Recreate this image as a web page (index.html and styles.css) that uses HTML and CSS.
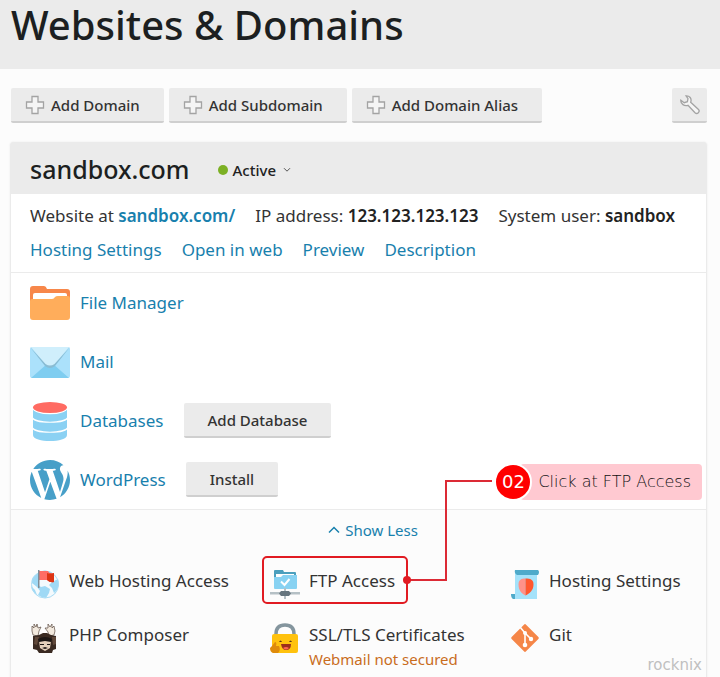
FILE: index.html
```html
<!DOCTYPE html>
<html lang="en">
<head>
<meta charset="utf-8">
<meta name="viewport" content="width=device-width, initial-scale=1">
<title>Websites &amp; Domains</title>
<link rel="stylesheet" href="styles.css">
</head>
<body>
<header class="page-header"><h1>Websites &amp; Domains</h1></header>
<main class="page">
  <div class="toolbar">
    <button class="btn btn-add" type="button"><svg class="plus" viewBox="0 0 20 20"><path d="M7 1.500h6v5.500h5.500v6H13v5.500H7V13H1.500V7H7z"/></svg>Add Domain</button>
    <button class="btn btn-add" type="button"><svg class="plus" viewBox="0 0 20 20"><path d="M7 1.500h6v5.500h5.500v6H13v5.500H7V13H1.500V7H7z"/></svg>Add Subdomain</button>
    <button class="btn btn-add" type="button"><svg class="plus" viewBox="0 0 20 20"><path d="M7 1.500h6v5.500h5.500v6H13v5.500H7V13H1.500V7H7z"/></svg>Add Domain Alias</button>
    <button class="btn btn-wrench" type="button" aria-label="Settings"><svg class="plus" viewBox="0 0 20 20"><path d="M6 .8C9.500.5 12 3.500 10.700 7.200l7.800 7.300c1.900 2.200-1.200 5.300-3.500 3.300L8 10.300C4.500 11.500.4 9 .8 5.200l3.400 2.500 3.200-1L8 3.600z"/></svg></button>
  </div>

  <section class="card">
    <header class="card-head">
      <h2>sandbox.com</h2>
      <button class="status" type="button"><span class="dot"></span>Active<svg class="chev" viewBox="0 0 8 6"><path d="M1 1.200l3 3 3-3"/></svg></button>
    </header>

    <div class="info">
      <div class="line">
        <span>Website at <a class="strong" href="#">sandbox.com/</a></span>
        <span>IP address: <b>123.123.123.123</b></span>
        <span>System user: <b>sandbox</b></span>
      </div>
      <nav class="line">
        <a href="#">Hosting Settings</a><a href="#">Open in web</a><a href="#">Preview</a><a href="#">Description</a>
      </nav>
    </div>

    <div class="tools">
      <div class="tool">
        <svg class="tool-icon" viewBox="0 0 40 40"><path fill="#f7874a" d="M0 6q0-3 3-3h11q2 0 3 3h20q3 0 3 3v14H0z"/><path fill="#fff" d="M3 12q0-2 2-2h30q2 0 2 2v8H3z"/><path fill="#ffad5b" d="M0 18q0-2 2-2h20q2 0 3-2 1-1 3-1h10q2 0 2 2v19q0 3-3 3H3q-3 0-3-3z"/></svg>
        <a href="#">File Manager</a>
      </div>
      <div class="tool">
        <svg class="tool-icon" viewBox="0 0 40 40"><rect y="5" width="40" height="31" rx="2" fill="#abe1fb"/><path fill="#7fcdf0" d="M1 36l16-14h6l16 14z"/><path fill="#d0effc" d="M1 5h38L24 23q-4 3-8 0z"/><path fill="#8abcd3" d="M0 5l15.500 17q4.500 3 9 0L40 5 25 24q-5 4-10 0z"/></svg>
        <a href="#">Mail</a>
      </div>
      <div class="tool">
        <svg class="tool-icon" viewBox="0 0 40 40"><path fill="#8bd1f3" d="M3 6v28c0 8 34 8 34 0V6z"/><path fill="none" stroke="#fff" stroke-width="1.200" d="M2 16c2 7 34 7 36 0M2 26c2 7 34 7 36 0"/><ellipse cx="20" cy="7" rx="17.500" ry="6.300" fill="#fff"/><ellipse cx="20" cy="6.500" rx="17" ry="5.500" fill="#ff6b62"/></svg>
        <a href="#">Databases</a>
        <button class="btn" type="button">Add Database</button>
      </div>
      <div class="tool">
        <svg class="tool-icon" viewBox="33 33 446 446"><path fill="#479fc8" d="M33 256c0-32.300 6.900-63 19.300-90.700l106.400 291.400C84.300 420.500 33 344.200 33 256zm223 223c-21.900 0-43-3.200-63-9.100l66.900-194.400 68.500 187.800c.5 1.100 1 2.100 1.600 3.100-23.100 8.100-48 12.600-74 12.600zm30.700-327.500c13.400-.7 25.500-2.100 25.500-2.100 12-1.400 10.600-19.100-1.400-18.400 0 0-36.100 2.800-59.400 2.800-21.900 0-58.700-2.800-58.700-2.800-12-.7-13.400 17.700-1.400 18.400 0 0 11.400 1.400 23.400 2.100l34.700 95.200L200.600 393l-81.200-241.500c13.400-.7 25.500-2.100 25.500-2.100 12-1.400 10.600-19.100-1.400-18.400 0 0-36.100 2.800-59.400 2.800-4.200 0-9.100-.1-14.400-.3C109.600 73 178.100 33 256 33c58 0 110.900 22.200 150.600 58.500-1-.1-1.900-.2-2.900-.2-21.900 0-37.400 19.100-37.400 39.600 0 18.400 10.600 33.900 21.900 52.300 8.500 14.800 18.400 33.900 18.400 61.500 0 19.100-7.300 41.200-17 72.100l-22.200 74.300-80.700-239.600zm81.400 297.200l68.100-196.900c12.700-31.800 17-57.200 17-79.900 0-8.200-.5-15.800-1.500-22.900 17.400 31.800 27.300 68.200 27.300 107 0 82.300-44.600 154.100-110.900 192.700z"/></svg>
        <a href="#">WordPress</a>
        <button class="btn" type="button">Install</button>
      </div>
    </div>

    <div class="more">
      <button class="toggle" type="button"><svg class="caret" viewBox="0 0 12 8"><path d="M1 6.500l5-5 5 5"/></svg>Show Less</button>
      <div class="grid">
        <a class="item" href="#">
          <svg class="item-icon" viewBox="0 0 30 30"><circle cx="15" cy="15.500" r="14" fill="#f4fafd"/><path fill="#9fd9f5" d="M4 7l4-3v12l3 2 4-1 5 3-1 4-3 5q-5-.5-8-3l2-4-3-4-5-4q-1-4 2-7zM12 2q8-1 12 4l-2 3-5 1-5-2zM22 13l6-3q2 6-1 11l-3 3-2-5-3-3zM1 17l4 4 2 5q-5-3-6-9z"/><circle cx="15" cy="15.500" r="13.500" fill="none" stroke="#aadcf4"/><path fill="#ff6d65" d="M9 2h9q1 3 6 2v9q-4 1-7-2H9z"/><path fill="#dc3514" d="M17 4q3 1 7 0v9q-4 1-7-2z"/><path fill="#7e8d97" d="M8 1h1.500v18H8z"/></svg>
          <span>Web Hosting Access</span>
        </a>
        <a class="item ftp" href="#">
          <svg class="item-icon" viewBox="0 0 30 30"><path fill="#4b9fbd" d="M4 2q0-1 1-1h8l1 2h11q1 0 1 1v5H4z"/><path fill="#fff" d="M6 5h18v3H6z"/><path fill="#88d2f2" d="M4 8h7l2-2h14v13q0 1-1 1H5q-1 0-1-1z"/><path fill="none" stroke="#fff" stroke-width="2" d="M11 12.500l3.500 3.500 5-6"/><path fill="#b5c0c5" d="M0 23h30v2.500H0zM14 19h2v11h-2z"/><path fill="#66757e" d="M11 22h8l2 2.500-2 2.500h-8l-2-2.500z"/></svg>
          <span>FTP Access</span>
          <span class="highlight" aria-hidden="true"></span>
          <svg class="connector" viewBox="0 0 92 110" aria-hidden="true"><path d="M5 104H44V5H90"/><circle cx="5" cy="104" r="4"/></svg>
        </a>
        <a class="item" href="#">
          <svg class="item-icon" viewBox="0 0 30 30"><path fill="#a4e2fa" d="M5 3h22v27H5z"/><path fill="#4faaca" d="M5 1h23q2 2 0 5H7Q4 4 5 1z"/><path fill="#4faaca" d="M1 25h4v5H3q-2-1-2-5z"/><path fill="#ff9189" d="M15.500 9.500c-4 0-7 1-7 6 0 6 3 9 7 11z"/><path fill="#ff572f" d="M15.500 9.500c5 0 8 1 8 6 0 6-4 9-8 11z"/></svg>
          <span>Hosting Settings</span>
        </a>
        <a class="item" href="#">
          <svg class="item-icon" viewBox="0 0 30 30"><path fill="#f3eadf" stroke="#5b4c42" stroke-width=".7" d="M2 3l2 2V1l2 3 1-3 1 4 3-1-2 4-1 5-5-1-1-4zM24 3l-2 2V1l-2 3-2-3v4l-3 0 3 4 1 4 5-1 1-4z"/><path fill="#3a2a22" d="M3 13l6-1 4-2 4 0 4 2 5 1v13l-3 1-1 3H9l-2-3-4-1z"/><path fill="#60483a" d="M5 14h4l-2 8-3-1zM22 14h4v7l-3 1z"/><path fill="#e5d0bb" d="M9 18l6-2 6 2-1 7-5 3-5-3z"/><path fill="#1d1715" d="M8 16q7-4 14 0l-1 3-6-1-6 1zM10 21h4v1h-4zM17 21h3v1h-3zM12 25l3-1 3 1-3 1z"/><path fill="#fff" d="M11 10l2-4 4 4z"/></svg>
          <span>PHP Composer</span>
        </a>
        <a class="item" href="#">
          <svg class="item-icon" viewBox="0 0 30 30"><path fill="none" stroke="#84959e" stroke-width="3.500" d="M6 13V11q0-9 9-9t9 9v2"/><rect x="2" y="11" width="26" height="19" rx="2" fill="#ffc20e"/><path fill="#5b3517" d="M9 19q1.500-3 3 0zM19 19q1.500-3 3 0z"/><path fill="#9b2e1c" d="M11 21h10q0 6-5 6-4 0-5-6z"/><path fill="#fd6653" d="M13 25q3-2 6 0-3 3-6 0z"/><path fill="#df8b0b" d="M2 23l3-4q2 0 1 4h3q2 4-1 7H3q-3-1-3-5z"/></svg>
          <span>SSL/TLS Certificates<small>Webmail not secured</small></span>
        </a>
        <a class="item" href="#">
          <svg class="item-icon" viewBox="0 0 30 30"><rect x="4.800" y="4.800" width="20.400" height="20.400" rx="1.500" fill="#f58648" transform="rotate(45 15 15)"/><path fill="none" stroke="#fff" stroke-width="1.600" d="M10 4l5 6v13M15 10l6 6"/><circle cx="15" cy="10" r="2" fill="#fff"/><circle cx="15" cy="22" r="2.300" fill="#fff"/><circle cx="21" cy="16" r="2.200" fill="#fff"/></svg>
          <span>Git</span>
        </a>
      </div>
      <div class="callout"><span class="step">02</span><span class="tip">Click at FTP Access</span></div>
      <span class="brand">rocknix</span>
    </div>
  </section>
</main>
</body>
</html>
```
FILE: styles.css
```css
* { box-sizing: border-box; }
body {
  margin: 0;
  min-height: 100vh;
  display: flex;
  flex-direction: column;
  background: #fcfcfc;
  color: #333;
  font: 17px/24px "Noto Sans", "Open Sans", sans-serif;
}
a { color: #1880ad; text-decoration: none; }
b, .strong { font-weight: 600; }
b { color: #222; }
h1, h2 { margin: 0; font-weight: 500; color: #1c1f21; }
h1 { font-size: 40px; line-height: 50px; }
h2 { font-size: 25px; line-height: 32px; }
svg { flex: none; display: block; }
button { font: inherit; color: inherit; border: 0; cursor: pointer; }

.page-header { background: #ebebeb; padding: 0 11px 19px; }
.page { flex: 1; display: flex; flex-direction: column; padding: 19px 13px 0 10px; }

.toolbar { display: flex; gap: 5px; margin-bottom: 19px; padding-left: 1px; }
.btn {
  display: inline-flex;
  align-items: center;
  justify-content: center;
  height: 35px;
  padding: 0 24px;
  background: #ebebeb;
  border-bottom: 2px solid #cfcfcf;
  border-radius: 2px;
  font-size: 15px;
  font-weight: 500;
}
.btn-add { gap: 6px; padding: 0 24px 0 14px; }
.btn-wrench { margin-left: auto; width: 35px; padding: 0; }
.plus { width: 20px; height: 20px; fill: #f5f5f5; stroke: #a3a3a3; stroke-width: 1.3; }

.card {
  flex: 1;
  display: flex;
  flex-direction: column;
  border: 1px solid #ebebeb;
  border-bottom: 0;
  border-radius: 4px 4px 0 0;
  background: #fff;
  box-shadow: 0 0 2px #e6e6e6;
}
.card-head {
  display: flex;
  align-items: center;
  gap: 28px;
  height: 51px;
  padding: 0 19px;
  background: #ebebeb;
}
.status {
  display: flex;
  align-items: center;
  gap: 5px;
  padding: 3px 0 0;
  background: none;
  font-size: 15px;
  font-weight: 500;
  color: #222;
}
.dot { width: 10px; height: 10px; border-radius: 50%; background: #7cb024; }
.chev { width: 8px; height: 6px; margin-left: 2px; fill: none; stroke: #555; }

.info { padding: 10px 19px; border-bottom: 1px solid #ebebeb; }
.line { display: flex; flex-wrap: wrap; column-gap: 20px; }
.line + .line { margin-top: 10px; }

.tools { border-bottom: 1px solid #ebebeb; }
.tool { display: flex; align-items: center; height: 59px; padding: 0 19px; }
.tool-icon { width: 40px; height: 40px; margin-right: 10px; }
.tool .btn { margin-left: 20px; }

.more { flex: 1; position: relative; padding: 8px 19px 5px; background: #fcfcfc; }
.toggle {
  display: flex;
  align-items: center;
  gap: 5px;
  margin: 0 auto;
  padding: 0 0 0 29px;
  background: none;
  color: #1880ad;
  font-size: 15px;
}
.caret { width: 12px; height: 8px; fill: none; stroke: #1880ad; stroke-width: 1.5; }
.grid { display: grid; grid-template-columns: 240px 240px 1fr; row-gap: 24px; padding-top: 27px; }
.item { position: relative; display: flex; align-items: flex-start; gap: 9px; color: #333; }
.item-icon { width: 30px; height: 30px; }
.item small { display: block; color: #c96d1d; font-size: 15px; }

.highlight {
  position: absolute;
  inset: -13px auto -5px -8px;
  width: 146px;
  border: 2px solid #e11b22;
  border-radius: 5px;
}
.connector { position: absolute; left: 132px; bottom: 13px; width: 92px; height: 110px; fill: #e11b22; }
.connector path { fill: none; stroke: #dc2a35; stroke-width: 2; }

.callout {
  position: absolute;
  top: -47px;
  right: 4px;
  display: flex;
  align-items: center;
  color: #111;
}
.step {
  z-index: 1;
  width: 38px;
  height: 38px;
  border: 2px solid #fff;
  border-radius: 50%;
  background: #f00;
  color: #fff;
  font: 400 18px/34px "DejaVu Sans", sans-serif;
  text-align: center;
}
.tip {
  margin-left: -12px;
  padding: 0 11px 0 18px;
  border-radius: 4px;
  background: #ffc9d1;
  font: 200 16px/36px "DejaVu Sans Light", "DejaVu Sans", sans-serif;
}
.brand {
  position: absolute;
  right: 4px;
  bottom: 2px;
  color: #c0c0c0;
  font: 15px/20px "DejaVu Sans", sans-serif;
}
```
